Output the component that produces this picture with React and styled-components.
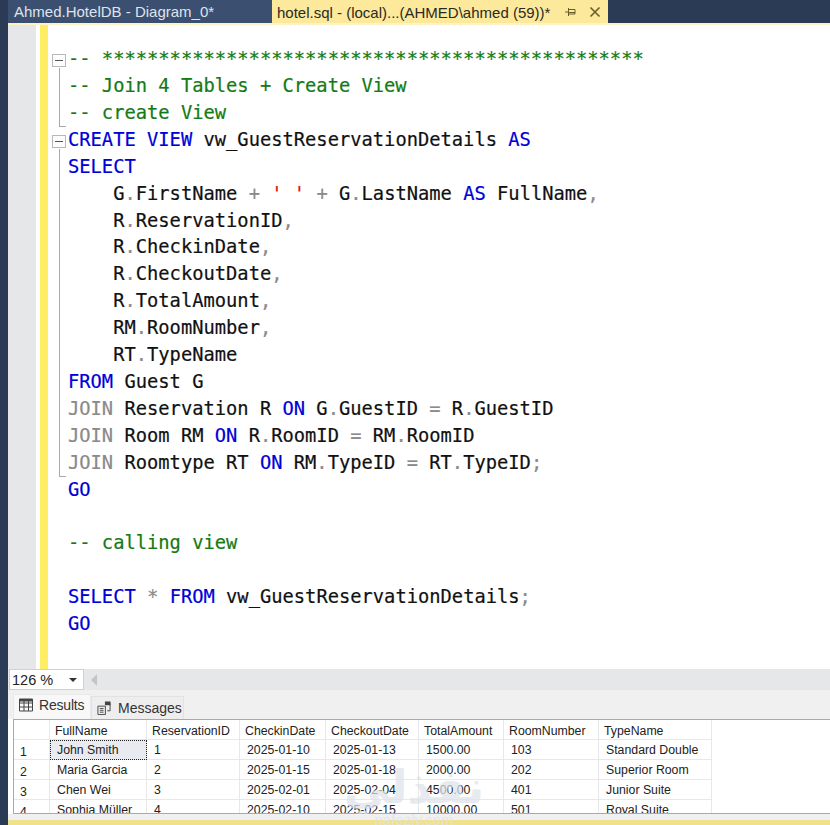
import React from 'react'
import styled, { createGlobalStyle } from 'styled-components'

const GlobalStyle = createGlobalStyle`
    html, body {
        margin: 0;
        padding: 0;
        background: #fff;
    }
`

// k = keyword, c = comment, g = gray operator, s = string, t = plain
const K = (text) => ['k', text]
const C = (text) => ['c', text]
const G = (text) => ['g', text]
const S = (text) => ['s', text]
const T = (text) => ['t', text]

const codeLines = [
    { fold: 'open', parts: [C('-- ************************************************')] },
    { fold: 'line', parts: [C('-- Join 4 Tables + Create View')] },
    { fold: 'end', parts: [C('-- create View')] },
    { fold: 'open', parts: [K('CREATE VIEW'), T(' vw_GuestReservationDetails '), K('AS')] },
    { fold: 'line', parts: [K('SELECT')] },
    { fold: 'line', parts: [T('    G'), G('.'), T('FirstName '), G('+'), T(' '), S("' '"), T(' '), G('+'), T(' G'), G('.'), T('LastName '), K('AS'), T(' FullName'), G(',')] },
    { fold: 'line', parts: [T('    R'), G('.'), T('ReservationID'), G(',')] },
    { fold: 'line', parts: [T('    R'), G('.'), T('CheckinDate'), G(',')] },
    { fold: 'line', parts: [T('    R'), G('.'), T('CheckoutDate'), G(',')] },
    { fold: 'line', parts: [T('    R'), G('.'), T('TotalAmount'), G(',')] },
    { fold: 'line', parts: [T('    RM'), G('.'), T('RoomNumber'), G(',')] },
    { fold: 'line', parts: [T('    RT'), G('.'), T('TypeName')] },
    { fold: 'line', parts: [K('FROM'), T(' Guest G')] },
    { fold: 'line', parts: [G('JOIN'), T(' Reservation R '), K('ON'), T(' G'), G('.'), T('GuestID '), G('='), T(' R'), G('.'), T('GuestID')] },
    { fold: 'line', parts: [G('JOIN'), T(' Room RM '), K('ON'), T(' R'), G('.'), T('RoomID '), G('='), T(' RM'), G('.'), T('RoomID')] },
    { fold: 'end', parts: [G('JOIN'), T(' Roomtype RT '), K('ON'), T(' RM'), G('.'), T('TypeID '), G('='), T(' RT'), G('.'), T('TypeID'), G(';')] },
    { parts: [K('GO')] },
    { parts: [] },
    { parts: [C('-- calling view')] },
    { parts: [] },
    { parts: [K('SELECT'), T(' '), G('*'), T(' '), K('FROM'), T(' vw_GuestReservationDetails'), G(';')] },
    { parts: [K('GO')] },
]

const columns = [
    { name: 'FullName', width: 97 },
    { name: 'ReservationID', width: 93 },
    { name: 'CheckinDate', width: 86 },
    { name: 'CheckoutDate', width: 93 },
    { name: 'TotalAmount', width: 85 },
    { name: 'RoomNumber', width: 95 },
    { name: 'TypeName', width: 113 },
]

const rows = [
    ['John Smith', '1', '2025-01-10', '2025-01-13', '1500.00', '103', 'Standard Double'],
    ['Maria Garcia', '2', '2025-01-15', '2025-01-18', '2000.00', '202', 'Superior Room'],
    ['Chen Wei', '3', '2025-02-01', '2025-02-04', '4500.00', '401', 'Junior Suite'],
    ['Sophia Müller', '4', '2025-02-10', '2025-02-15', '10000.00', '501', 'Royal Suite'],
]

function App() {
    return (
        <Page>
            <GlobalStyle />
            <SideStrip />
            <Main>
                <TabBar>
                    <DiagramTab>Ahmed.HotelDB - Diagram_0*</DiagramTab>
                    <SqlTab>
                        <span>hotel.sql - (local)...(AHMED\ahmed (59))*</span>
                        <PinIcon viewBox="0 0 12 12">
                            <path d="M1 6h3M4.5 2v8M5 3.5h6v4.5H5M5 6.5h6" fill="none" stroke="#6b5d2a" strokeWidth="1" />
                        </PinIcon>
                        <CloseIcon viewBox="0 0 12 12">
                            <path d="M1.5 1.5l9 9M10.5 1.5l-9 9" fill="none" stroke="#6b5d2a" strokeWidth="1.6" />
                        </CloseIcon>
                    </SqlTab>
                </TabBar>
                <Editor>
                    <Gutter />
                    <GutterGap />
                    <ChangeBar />
                    <Code>
                        {codeLines.map((line, index) => (
                            <CodeLine key={index}>
                                <FoldCell kind={line.fold} />
                                <LineText>
                                    {line.parts.map(([kind, text], i) => (
                                        <Token key={i} $kind={kind}>{text}</Token>
                                    ))}
                                </LineText>
                            </CodeLine>
                        ))}
                    </Code>
                </Editor>
                <ZoomBar>
                    <ZoomBox>
                        <span>126 %</span>
                        <DropArrow />
                    </ZoomBox>
                    <ScrollArrow />
                </ZoomBar>
                <ResultTabs>
                    <ResultsTab>
                        <TabIcon viewBox="0 0 14 13">
                            <path d="M.5.5h13v12H.5zM.5 4.5h13M.5 8.5h13M5 .5v12M9.5.5v12" fill="none" stroke="#444" strokeWidth="1" />
                            <path d="M.5.5h13v2.5H.5z" fill="#444" />
                        </TabIcon>
                        <span>Results</span>
                    </ResultsTab>
                    <MessagesTab>
                        <TabIcon viewBox="0 0 14 15">
                            <path d="M.5 5.5h8v9h-8zM2.5 8h4M2.5 10h4M2.5 12h4M8.5 2.5h5v8h-3" fill="none" stroke="#444" strokeWidth="1" />
                            <path d="M8 .5h6v4H8z" fill="#444" />
                        </TabIcon>
                        <span>Messages</span>
                    </MessagesTab>
                </ResultTabs>
                <Grid>
                    <HeaderRow>
                        <RowHead />
                        {columns.map((col) => (
                            <HeaderCell key={col.name} style={{ width: col.width }}>{col.name}</HeaderCell>
                        ))}
                    </HeaderRow>
                    {rows.map((row, r) => (
                        <DataRow key={r}>
                            <RowNumber>{r + 1}</RowNumber>
                            {row.map((value, c) => (
                                <DataCell key={c} $selected={r === 0 && c === 0} style={{ width: columns[c].width }}>
                                    {value}
                                </DataCell>
                            ))}
                        </DataRow>
                    ))}
                </Grid>
                <GridFooter />
                <StatusStrip />
            </Main>
            <Watermark>
                <WatermarkWord>نفذلي</WatermarkWord>
                <WatermarkSite>nafezly.com</WatermarkSite>
            </Watermark>
        </Page>
    )
}

export default App

function FoldCell({ kind }) {
    return (
        <FoldColumn>
            {kind === 'open' && <FoldBox />}
            {kind === 'open' && <FoldLine $top="22px" />}
            {kind === 'line' && <FoldLine />}
            {kind === 'end' && <FoldLine $end />}
        </FoldColumn>
    )
}

const Page = styled.div`
    width: 830px;
    height: 825px;
    position: relative;
    display: flex;
    overflow: hidden;
    background: #fff;
`

const SideStrip = styled.div`
    width: 8px;
    flex: none;
    background: #2b3a55;
`

const Main = styled.div`
    flex: 1;
    min-width: 0;
    display: flex;
    flex-direction: column;
`

const TabBar = styled.div`
    height: 23px;
    flex: none;
    display: flex;
    background: #2b3a55;
    font-family: "Liberation Sans", Arial, sans-serif;
    font-size: 15px;
`

const DiagramTab = styled.div`
    width: 264px;
    padding-left: 6px;
    box-sizing: border-box;
    display: flex;
    align-items: center;
    background: #3b4f71;
    color: #dfe4ec;
`

const SqlTab = styled.div`
    width: 336px;
    height: 25px;
    flex: none;
    padding: 0 6px 1px 5px;
    box-sizing: border-box;
    display: flex;
    align-items: center;
    background: #fde99c;
    color: #2a2a22;
    white-space: nowrap;
`

const PinIcon = styled.svg`
    width: 12px;
    height: 12px;
    flex: none;
    margin-left: 14px;
`

const CloseIcon = styled.svg`
    width: 12px;
    height: 12px;
    flex: none;
    margin-left: 13px;
`

const Editor = styled.div`
    height: 646px;
    flex: none;
    display: flex;
    border-top: 2px solid #fdf3c5;
    box-sizing: border-box;
    background: #fff;
`

const Gutter = styled.div`
    width: 28px;
    flex: none;
    background: #e6e7e8;
`

const GutterGap = styled.div`
    width: 4px;
    flex: none;
`

const ChangeBar = styled.div`
    width: 8px;
    flex: none;
    background: #ffee62;
`

const Code = styled.div`
    flex: 1;
    min-width: 0;
    padding-top: 21px;
    font-family: "DejaVu Sans Mono", monospace;
    font-size: 18.75px;
    -webkit-text-stroke: 0.2px;
`

const CodeLine = styled.div`
    height: 26.92px;
    display: flex;
    align-items: center;
`

const FoldColumn = styled.div`
    width: 20px;
    height: 100%;
    flex: none;
    position: relative;
`

const FoldBox = styled.div`
    position: absolute;
    left: 4px;
    top: 8px;
    width: 14px;
    height: 13px;
    box-sizing: border-box;
    border: 1px solid #b8b8b8;
    background: #fdfdfd;

    &::after {
        content: '';
        position: absolute;
        left: 2px;
        right: 2px;
        top: 5px;
        height: 1px;
        background: #555;
    }
`

const FoldLine = styled.div`
    position: absolute;
    left: 11px;
    top: ${(p) => p.$top || '0'};
    bottom: 0;
    width: 7px;
    box-sizing: border-box;
    border-left: 1px solid #a8a8a8;
    border-bottom: ${(p) => (p.$end ? '1px solid #a8a8a8' : 'none')};
`

const LineText = styled.div`
    white-space: pre;
    line-height: 1;
`

const tokenColors = {
    k: '#0000d8',
    c: '#147a14',
    g: '#8a8a8a',
    s: '#e01010',
    t: '#111',
}

const Token = styled.span`
    color: ${(p) => tokenColors[p.$kind]};
`

const ZoomBar = styled.div`
    height: 21px;
    flex: none;
    display: flex;
    align-items: center;
    background: #e6e7e8;
`

const ZoomBox = styled.div`
    width: 75px;
    height: 21px;
    box-sizing: border-box;
    margin-left: 1px;
    padding: 0 6px 0 2px;
    display: flex;
    align-items: center;
    justify-content: space-between;
    background: #fff;
    border: 1px solid #cfd0d2;
    color: #222;
    font-family: "Liberation Sans", Arial, sans-serif;
    font-size: 14.5px;
`

const DropArrow = styled.div`
    width: 0;
    height: 0;
    border-left: 4px solid transparent;
    border-right: 4px solid transparent;
    border-top: 4px solid #333;
`

const ScrollArrow = styled.div`
    width: 0;
    height: 0;
    margin-left: 7px;
    border-top: 6px solid transparent;
    border-bottom: 6px solid transparent;
    border-right: 6px solid #c4c5c7;
`

const ResultTabs = styled.div`
    height: 29px;
    flex: none;
    display: flex;
    align-items: flex-end;
    padding-left: 5px;
    box-sizing: border-box;
    background: #f0f0f1;
    font-family: "Liberation Sans", Arial, sans-serif;
    font-size: 14px;
    color: #333;
`

const ResultsTab = styled.div`
    width: 78px;
    height: 25px;
    box-sizing: border-box;
    padding: 0 0 4px 5px;
    display: flex;
    align-items: center;
    gap: 6px;
    letter-spacing: -0.2px;
    background: #f8f8f9;
    border: 1px solid #eaeaeb;
    border-bottom: none;
`

const MessagesTab = styled.div`
    width: 93px;
    height: 23px;
    box-sizing: border-box;
    padding-left: 5px;
    display: flex;
    align-items: center;
    gap: 7px;
    background: #eeeeef;
    border: 1px solid #e2e2e3;
    border-bottom: none;
`

const TabIcon = styled.svg`
    width: 14px;
    height: 14px;
    flex: none;
`

const Grid = styled.div`
    height: 95px;
    flex: none;
    margin-left: 5px;
    overflow: hidden;
    box-sizing: border-box;
    background: #fff;
    border-top: 1px solid #a9a9a9;
    border-left: 1px solid #a9a9a9;
    border-bottom: 1px solid #a9a9a9;
    font-family: "Liberation Sans", Arial, sans-serif;
    font-size: 12.3px;
    color: #222;
`

const HeaderRow = styled.div`
    display: flex;
    height: 20px;
`

const DataRow = styled.div`
    display: flex;
    height: 20px;
`

const RowHead = styled.div`
    width: 36px;
    flex: none;
    box-sizing: border-box;
    border-right: 1px solid #e8e8e8;
    border-bottom: 1px solid #e8e8e8;
`

const RowNumber = styled(RowHead)`
    padding: 5px 0 0 6px;
`

const HeaderCell = styled.div`
    flex: none;
    box-sizing: border-box;
    padding: 4px 0 0 5px;
    border-right: 1px solid #e8e8e8;
    border-bottom: 1px solid #e8e8e8;
`

const DataCell = styled.div`
    flex: none;
    box-sizing: border-box;
    padding: 3px 0 0 7px;
    border-right: 1px solid #e8e8e8;
    border-bottom: 1px solid #e8e8e8;
    white-space: nowrap;
    background: ${(p) => (p.$selected ? '#e9ebf0' : 'transparent')};
    outline: ${(p) => (p.$selected ? '1px dotted #222' : 'none')};
    outline-offset: -1px;
`

const GridFooter = styled.div`
    height: 6px;
    flex: none;
    background: #f0f0f1;
`

const StatusStrip = styled.div`
    flex: 1;
    background: #efe28a;
`

const Watermark = styled.div`
    position: absolute;
    left: 360px;
    top: 762px;
    width: 108px;
    display: flex;
    flex-direction: column;
    align-items: center;
    color: rgba(222, 226, 234, 0.72);
    pointer-events: none;
`

const WatermarkWord = styled.div`
    font-family: "DejaVu Sans", sans-serif;
    font-size: 46px;
    font-weight: 700;
    line-height: 50px;
`

const WatermarkSite = styled.div`
    font-family: "Liberation Sans", Arial, sans-serif;
    font-size: 15px;
    line-height: 16px;
`
